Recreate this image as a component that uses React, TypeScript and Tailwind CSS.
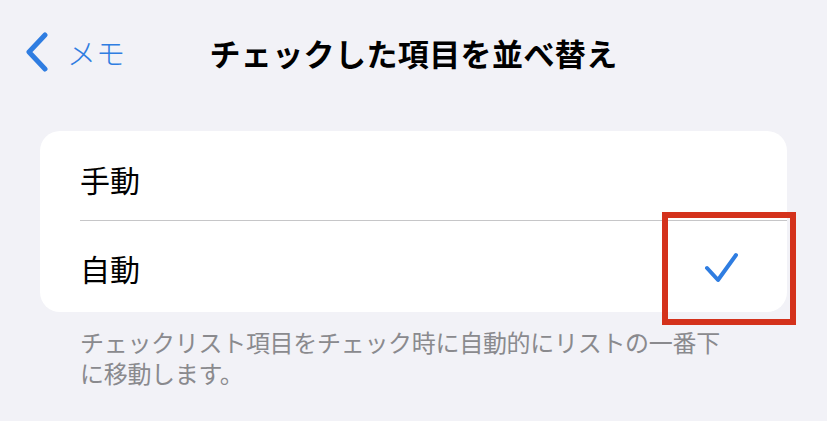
import React from "react";

function BackChevron() {
  return (
    <svg width="24" height="40" viewBox="0 0 24 40" fill="none">
      <path
        d="M20 3 L4 20 L20 37"
        stroke="#2f7de1"
        strokeWidth="5"
        strokeLinecap="round"
        strokeLinejoin="round"
      />
    </svg>
  );
}

function Check() {
  return (
    <svg width="35" height="32" viewBox="0 0 35 32" fill="none">
      <path
        d="M3 16 L14 28 L32 3"
        stroke="#2f7de1"
        strokeWidth="4"
        strokeLinecap="round"
        strokeLinejoin="round"
      />
    </svg>
  );
}

export default function App() {
  return (
    <div
      className="relative w-[827px] h-[421px] overflow-hidden bg-[#f2f2f7] text-black"
      style={{ fontFamily: '"Noto Sans CJK JP", "Noto Sans", sans-serif' }}
    >
      <header className="grid h-[104px] grid-cols-[1fr_auto_1fr] items-center">
        <div className="flex items-center gap-[18px] pl-[25px]">
          <BackChevron />
          <span className="text-[29px] font-light leading-none text-[#2f7de1]">メモ</span>
        </div>
        <h1 className="text-[31px] font-bold leading-none tracking-[0.4px]">
          チェックした項目を並べ替え
        </h1>
        <div />
      </header>

      <div className="mx-[40px] mt-[27px] rounded-[20px] bg-white">
        <div className="flex h-[89px] items-center pl-[40px] pt-[6px]">
          <span className="text-[30px] leading-none">手動</span>
        </div>
        <div className="ml-[40px] h-px bg-[#c6c6c8]" />
        <div className="flex h-[91px] items-center justify-between pl-[40px] pr-[48px] pt-[3px]">
          <span className="text-[30px] leading-none">自動</span>
          <Check />
        </div>
      </div>

      <div className="mt-[14px] flex flex-col px-[80px] text-[24px] leading-none tracking-[-0.3px] text-[#8a8a8e]">
        <div className="flex h-[31px] items-center">チェックリスト項目をチェック時に自動的にリストの一番下</div>
        <div className="flex h-[31px] items-center">に移動します。</div>
      </div>

      <div className="absolute left-[662px] top-[212px] h-[113px] w-[134px] border-[6px] border-[#d4321c]" />
    </div>
  );
}
